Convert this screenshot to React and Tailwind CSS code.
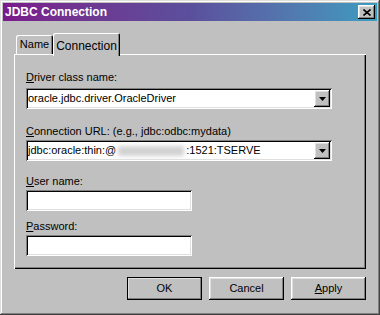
import React from 'react';

const raised =
    'bg-[#c0c0c0] shadow-[inset_-1px_-1px_#000,inset_1px_1px_#fff,inset_-2px_-2px_#808080,inset_2px_2px_#dfdfdf]';
const sunken =
    'bg-white shadow-[inset_1px_1px_#808080,inset_-1px_-1px_#fff,inset_2px_2px_#000,inset_-2px_-2px_#dfdfdf]';

const Key = ({ children }) => <span className="underline underline-offset-[1px]">{children}</span>;

const Combo = ({ children }) => (
    <div className={`flex h-[21px] w-[306px] items-center pl-[2px] pr-[2px] ${sunken}`}>
        <div className="flex flex-1 items-center overflow-hidden whitespace-nowrap text-black">{children}</div>
        <div className={`flex h-[17px] w-[16px] items-center justify-center ${raised}`}>
            <svg width="7" height="4" viewBox="0 0 7 4">
                <path d="M0 0h7L3.5 4z" fill="#000" />
            </svg>
        </div>
    </div>
);

const Field = () => <div className={`h-[21px] w-[166px] ${sunken}`} />;

const Button = ({ children, primary }) => (
    <div
        className={`flex h-[23px] w-[75px] items-center justify-center ${raised} ${
            primary ? 'outline outline-1 outline-black -outline-offset-1' : ''
        }`}
    >
        {children}
    </div>
);

const App = () => {
    return (
        <div
            className="flex h-[315px] w-[380px] flex-col bg-[#c0c0c0] p-[3px] text-[11px] text-black shadow-[inset_-1px_-1px_#404040,inset_1px_1px_#dfdfdf,inset_-2px_-2px_#808080,inset_2px_2px_#fff]"
            style={{ fontFamily: '"Liberation Sans", Arial, sans-serif' }}
        >
            {/* title bar */}
            <div className="flex h-[18px] items-center justify-between bg-linear-to-r from-[#7a1a8a] via-[#5a4f9c] to-[#3a9cc0] pl-[2px] pr-[2px]">
                <span className="text-[12px] font-bold text-white">JDBC Connection</span>
                <div className={`flex h-[14px] w-[17px] items-center justify-center ${raised}`}>
                    <svg width="8" height="7" viewBox="0 0 8 7">
                        <path d="M0.5 0.5L7.5 6.5M7.5 0.5L0.5 6.5" stroke="#000" strokeWidth="1.6" />
                    </svg>
                </div>
            </div>

            {/* tabs */}
            <div className="mt-[12px] flex items-end pl-[13px]">
                <div className="flex h-[19px] w-[37px] items-center justify-center rounded-t-[2px] shadow-[inset_1px_1px_#fff,inset_-1px_0_#000,inset_-2px_0_#808080]">
                    Name
                </div>
                <div className="relative z-10 -mb-[2px] flex h-[23px] w-[67px] items-start justify-center rounded-t-[2px] bg-[#c0c0c0] pt-[4px] text-[12px] shadow-[inset_1px_1px_#fff,inset_-1px_0_#000,inset_-2px_0_#808080]">
                    Connection
                </div>
            </div>

            {/* panel */}
            <div className="mx-[11px] flex h-[215px] flex-col pl-[12px] pt-[17px] shadow-[inset_1px_1px_#fff,inset_-1px_-1px_#000,inset_-2px_-2px_#808080]">
                <div className="leading-[13px]">
                    <Key>D</Key>river class name:
                </div>
                <div className="mt-[4px]">
                    <Combo>oracle.jdbc.driver.OracleDriver</Combo>
                </div>
                <div className="mt-[16px] leading-[13px]">
                    <Key>C</Key>onnection URL: (e.g., jdbc:odbc:mydata)
                </div>
                <div className="mt-[2px]">
                    <Combo>
                        <span>jdbc:oracle:thin:@</span>
                        <span className="mx-[2px] h-[10px] w-[66px] bg-[#d2d2d2] blur-[2px]" />
                        <span>:1521:TSERVE</span>
                    </Combo>
                </div>
                <div className="mt-[14px] leading-[13px]">
                    <Key>U</Key>ser name:
                </div>
                <div className="mt-[2px]">
                    <Field />
                </div>
                <div className="mt-[9px] leading-[13px]">
                    <Key>P</Key>assword:
                </div>
                <div className="mt-[2px]">
                    <Field />
                </div>
            </div>

            {/* buttons */}
            <div className="mt-[8px] flex justify-end gap-[7px] pr-[11px]">
                <Button primary>OK</Button>
                <Button>Cancel</Button>
                <Button>
                    <span>
                        <Key>A</Key>pply
                    </span>
                </Button>
            </div>
        </div>
    );
};

export default App;
